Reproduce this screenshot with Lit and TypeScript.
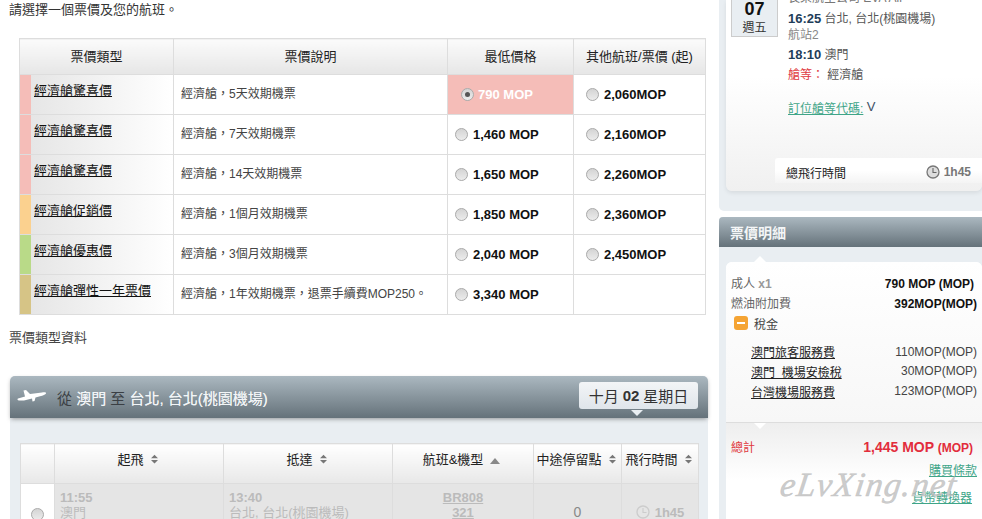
import { LitElement, html, css, svg } from "lit";
import { customElement } from "lit/decorators.js";

const fares = [
  ["#f5bdb8", "經濟艙驚喜價", "經濟艙，5天效期機票", "790 MOP", "2,060MOP"],
  ["#f5bdb8", "經濟艙驚喜價", "經濟艙，7天效期機票", "1,460 MOP", "2,160MOP"],
  ["#f5bdb8", "經濟艙驚喜價", "經濟艙，14天效期機票", "1,650 MOP", "2,260MOP"],
  ["#fbd18f", "經濟艙促銷價", "經濟艙，1個月效期機票", "1,850 MOP", "2,360MOP"],
  ["#b9da88", "經濟艙優惠價", "經濟艙，3個月效期機票", "2,040 MOP", "2,450MOP"],
  ["#d6c486", "經濟艙彈性一年票價", "經濟艙，1年效期機票，退票手續費MOP250。", "3,340 MOP", ""],
];

const sort = svg`<svg class="sort" width="7" height="10" viewBox="0 0 8 10"><path d="M4 0 8 4H0Z M0 6H8L4 10Z" fill="#777"/></svg>`;
const clock = (c: string) => html`<svg class="clock" width="14" height="14" viewBox="0 0 14 14"><circle cx="7" cy="7" r="6" fill="${c === "g" ? "none" : "#ddd"}" stroke="${c === "g" ? "#ccc" : "#777"}" stroke-width="1.3"/><path d="M7 3V7.5H10.5" fill="none" stroke="${c === "g" ? "#ccc" : "#666"}" stroke-width="1.1"/></svg>`;

@customElement("app-root")
export class AppRoot extends LitElement {
  static styles = css`
    :host { display: block; width: 982px; height: 519px; overflow: hidden; background: #fff; position: relative;
      font-family: "Liberation Sans", "Noto Sans CJK TC", sans-serif; font-size: 13px; color: #333; }
    .page { display: grid; grid-template-columns: 719px 263px; height: 519px; overflow: hidden; }
    .main { min-width: 0; }
    .intro { margin: 0; padding: 0 0 0 9px; line-height: 20px; color: #333; }
    table { border-collapse: collapse; table-layout: fixed; }
    .fares { width: 686px; margin: 18px 0 0 19px; }
    .fares th, .fares td { border: 1px solid #ddd; padding: 0; }
    .fares th { height: 36px; font-weight: 400; font-size: 13px; color: #222; padding-bottom: 2px; box-sizing: border-box;
      background: linear-gradient(#fbfbfb, #e6e6e6); text-align: center; }
    .fares td { height: 39px; }
    .c1 { width: 154px; } .c2 { width: 274px; } .c3 { width: 126px; } .c4 { width: 132px; }
    .type { display: flex; height: 39px; background: linear-gradient(90deg, #e4e4e4, #fff); }
    .bar { width: 11px; flex: none; margin-right: 3px; }
    .type a { color: #111; text-decoration: underline; line-height: 31px; height: 31px; }
    .desc { padding: 0 0 5px 7px !important; font-size: 12px; color: #444; box-sizing: border-box; }
    .price { font-weight: 700; color: #111; padding-left: 7px !important; }
    .price > div { display: flex; align-items: center; gap: 5px; }
    .c3p { padding-left: 12px !important; }
    .sel { background: #f5bdb8; color: #fff; padding-left: 13px !important; }
    .sel > div { gap: 4px; }
    .radio { width: 11px; height: 11px; border-radius: 50%; border: 1px solid #aaa; flex: none;
      background: linear-gradient(#d4d4d4, #ececec); display: inline-flex; align-items: center; justify-content: center; }
    .radio.on::after { content: ""; width: 5px; height: 5px; border-radius: 50%; background: #555; }
    .note { margin: 13px 0 0; padding-left: 9px; font-size: 13px; line-height: 20px; color: #444; }
    .flight { margin: 28px 0 0 10px; width: 698px; background: #e9eef2; border-radius: 5px 5px 0 0; height: 143px; }
    .fhead { height: 42px; border-radius: 5px 5px 0 0; background: linear-gradient(#abb8c0, #65727a);
      display: flex; align-items: center; padding: 0 10px 0 6px; box-shadow: 0 2px 4px -1px rgba(60,60,60,.5); }
    .fhead svg { flex: none; }
    .route { margin-left: 9px; font-size: 15px; color: #f2f5f7; white-space: pre; text-shadow: 0 0 .6px rgba(255,255,255,.7); }
    .route .k { color: #3a3f44; text-shadow: none; }
    .date { margin-left: auto; width: 119px; height: 27px; border-radius: 3px; background: linear-gradient(#f3f5f7, #dfe5ea);
      font-size: 15px; color: #333; display: flex; align-items: center; justify-content: center; gap: 4px; position: relative; top: -2px; }
    .date::after { content: ""; position: absolute; left: 52px; top: 28px; border: 6px solid transparent; border-top-color: #e9eef2; border-bottom: 0; }
    .ftable { width: 678px; margin: 25px 0 0 10px; }
    .ftable th, .ftable td { border: 1px solid #ddd; padding: 0; }
    .ftable th { height: 40px; box-sizing: border-box; background: linear-gradient(#fff, #e8e8e8); font-weight: 400; color: #222; font-size: 13px; text-align: center; padding: 0 3px 10px 0; white-space: nowrap; }
    .ftable .sort { margin-left: 7px; }
    .ftable td { background: #e5e5e5; color: #bbb; height: 56px; vertical-align: top; }
    .ftable td.w { background: #fff; vertical-align: middle; text-align: center; padding-top: 8px; height: 48px; }
    .fl1 { width: 34px; } .fl2 { width: 169px; } .fl3 { width: 169px; } .fl4 { width: 141px; } .fl5 { width: 88px; } .fl6 { width: 77px; }
    .t { font-weight: 700; font-size: 13px; line-height: 15px; }
    .stack { padding: 6px 0 0 5px; line-height: 15px; }
    .mid { text-align: center; }
    .mid u { font-weight: 700; font-size: 13px; display: block; line-height: 15px; }
    .flightno { padding-top: 6px; text-align: center; }
    .centered { vertical-align: middle !important; text-align: center; font-size: 14px; padding-top: 1px; }
    .ftable td.zero { color: #888; }
    .dur { display: flex; align-items: center; justify-content: center; gap: 5px; font-weight: 700; height: 56px; }
    .side { min-width: 0; overflow: hidden; }
    .box1 { background: #e9eef2; height: 211px; border-radius: 0 0 0 5px; overflow: hidden; padding-left: 7px; box-sizing: border-box; }
    .card1 { height: 191px; border-radius: 0 0 6px 6px; background: linear-gradient(#fff 40%, #f0f0f0); box-shadow: 0 2px 4px rgba(0,0,0,.08); display: grid; grid-template-rows: 158px 25px; }
    .itin { display: flex; margin-top: -10px; height: 168px; }
    .day { width: 47px; height: 47px; margin-left: 5px; flex: none; background: #e9eef2; border: 1px solid #ccc; text-align: center; box-sizing: border-box; padding-top: 5px; }
    .day b { display: block; font-size: 18px; color: #111; line-height: 26px; }
    .day span { display: block; font-size: 12px; line-height: 12px; color: #333; }
    .info { margin-left: 10px; font-size: 12px; color: #555; line-height: 16px; }
    .info div { white-space: nowrap; }
    .info b { color: #1e3d59; font-size: 13px; }
    .airline { color: #777; }
    .l2 { margin-top: 5px; }
    .l4, .l5 { margin-top: 4px; }
    .muted { color: #888; }
    .red { color: #e0393e; }
    .info .pay { margin-top: 18px; }
    .info a { color: #3fa588; text-decoration: underline; }
    .code { font-size: 13px; color: #3d5266; position: relative; top: -2px; }
    .total { margin-left: 49px; background: linear-gradient(#fff 50%, #f4f4f4); border-radius: 3px 0 0 0; display: flex; align-items: center; justify-content: space-between; padding: 3px 11px 0 11px; font-size: 12px; color: #222; }
    .total span { display: inline-flex; align-items: center; gap: 4px; font-weight: 700; color: #777; font-size: 12px; }
    .box2 { margin-top: 6px; background: #e9eef2; height: 302px; border-radius: 4px 0 0 0; overflow: hidden; }
    .bh { height: 30px; background: linear-gradient(#abb8c0, #65727a); color: #f4f6f7; font-size: 14px; font-weight: 700; line-height: 32px; padding-left: 11px; }
    .card2 { margin: 15px 0 0 7px; height: 257px; background: #fff; border-radius: 6px; position: relative; box-sizing: border-box; }
    .card2::before { content: ""; position: absolute; left: 28px; top: -6px; border: 6px solid transparent; border-bottom-color: #fff; border-top: 0; }
    .rows { padding: 13px 5px 0 5px; height: 160px; box-sizing: border-box; background: linear-gradient(#fff, #f7f7f7); border-radius: 6px 6px 0 0; }
    .row { display: flex; justify-content: space-between; height: 20px; line-height: 18px; font-size: 12px; color: #666; }
    .row .v { font-weight: 700; color: #111; }
    .row .x { color: #999; font-weight: 700; }
    .v1 { margin-right: 3px; }
    .tax { display: flex; align-items: center; gap: 6px; padding-left: 3px; height: 20px; font-size: 12px; color: #444; margin-bottom: 11px; margin-top: -2px; }
    .minus { width: 14px; height: 14px; border-radius: 3px; background: #f5a433; display: flex; align-items: center; justify-content: center; }
    .minus::after { content: ""; width: 8px; height: 2px; background: #fff; }
    .sub { padding-left: 20px; }
    .sub a { color: #222; text-decoration: underline; }
    .sub .n { color: #444; font-size: 12px; margin-top: -1px; }
    .sub .n2 { margin-top: -2px; }
    .sum { position: relative; border-top: 1px solid #ddd; background: linear-gradient(#eee, #fff 60%); height: 97px; padding: 14px 9px 0 5px; box-sizing: border-box; }
    .sum::before { content: ""; position: absolute; left: 28px; top: 0; border: 6px solid transparent; border-top-color: #fff; border-bottom: 0; }
    .sumrow { display: flex; justify-content: space-between; align-items: center; color: #e0393e; font-size: 12px; line-height: 20px; }
    .sumrow b { font-size: 14px; color: #e22d3c; }
    .sumrow b small { font-size: 12px; }
    .lnk { text-align: right; font-size: 12px; color: #3fa588; text-decoration: underline; display: block; margin-right: -4px; margin-top: 3px; line-height: 20px; }
    .lnk2 { margin-right: 1px; margin-top: 7px; }
    .mark { position: absolute; left: 778px; top: 466px; font-family: "Liberation Serif", serif; font-style: italic; font-size: 34px; letter-spacing: 1.2px; color: rgba(190,190,190,.8); -webkit-text-stroke: .5px rgba(190,190,190,.8); transform: skewX(-8deg); transform-origin: left bottom; white-space: nowrap; pointer-events: none; }
  `;

  render() {
    return html`
      <div class="page">
        <div class="main">
          <p class="intro">請選擇一個票價及您的航班。</p>
          <table class="fares">
            <colgroup><col class="c1" /><col class="c2" /><col class="c3" /><col class="c4" /></colgroup>
            <tr><th>票價類型</th><th>票價說明</th><th>最低價格</th><th>其他航班/票價 (起)</th></tr>
            ${fares.map((f, i) => html`<tr>
              <td><div class="type"><span class="bar" style="background:${f[0]}"></span><a>${f[1]}</a></div></td>
              <td class="desc">${f[2]}</td>
              <td class="price ${i === 0 ? "sel" : ""}"><div><span class="radio ${i === 0 ? "on" : ""}"></span>${f[3]}</div></td>
              <td class="price c3p">${f[4] ? html`<div><span class="radio"></span>${f[4]}</div>` : ""}</td>
            </tr>`)}
          </table>
          <p class="note">票價類型資料</p>
          <section class="flight">
            <div class="fhead">
              <svg width="32" height="18" viewBox="0 0 32 18"><path d="M7.5 2.5 10 2 14 6 26 4.4C29 4 30.5 4.5 30 5.5 29.5 6.5 27 7.5 24 8.3L19.5 9.5 18.5 13 16.5 13.5 16 10.5 8 12.5H3C1.5 12.5 1 11 2 10.5L9 8.5Z" fill="#fff"/></svg>
              <span class="route"><span class="k">從 </span>澳門<span class="k"> 至 </span>台北, 台北(桃園機場)</span>
              <div class="date">十月 <b>02</b> 星期日</div>
            </div>
            <table class="ftable">
              <colgroup><col class="fl1" /><col class="fl2" /><col class="fl3" /><col class="fl4" /><col class="fl5" /><col class="fl6" /></colgroup>
              <tr>
                <th></th><th>起飛${sort}</th><th>抵達${sort}</th>
                <th>航班&機型<svg class="sort" width="10" height="6" viewBox="0 0 10 6"><path d="M5 0 10 6H0Z" fill="#888"/></svg></th>
                <th>中途停留點${sort}</th><th>飛行時間${sort}</th>
              </tr>
              <tr>
                <td class="w"><span class="radio"></span></td>
                <td><div class="stack"><div class="t">11:55</div>澳門</div></td>
                <td><div class="stack"><div class="t">13:40</div>台北, 台北(桃園機場)</div></td>
                <td><div class="flightno mid"><u>BR808</u><u>321</u></div></td>
                <td class="centered zero">0</td>
                <td><div class="dur">${clock("g")}1h45</div></td>
              </tr>
            </table>
          </section>
        </div>
        <aside class="side">
          <div class="box1">
            <div class="card1">
              <div class="itin">
                <div class="day"><b>07</b><span>週五</span></div>
                <div class="info">
                  <div class="airline">長榮航空公司 EVA Air</div>
                  <div class="l2"><b>16:25</b> 台北, 台北(桃園機場)</div>
                  <div class="muted">航站2</div>
                  <div class="l4"><b>18:10</b> 澳門</div>
                  <div class="l5"><span class="red">艙等：</span> 經濟艙</div>
                  <div class="pay"><a>訂位艙等代碼:</a> <span class="code">V</span></div>
                </div>
              </div>
              <div class="total">總飛行時間<span>${clock("d")}1h45</span></div>
            </div>
          </div>
          <div class="box2">
            <div class="bh">票價明細</div>
            <div class="card2">
              <div class="rows">
                <div class="row"><span>成人 <span class="x">x1</span></span><span class="v v1">790 MOP (MOP)</span></div>
                <div class="row"><span>燃油附加費</span><span class="v">392MOP(MOP)</span></div>
                <div class="tax"><span class="minus"></span>稅金</div>
                <div class="row sub"><a>澳門旅客服務費</a><span class="n">110MOP(MOP)</span></div>
                <div class="row sub"><a>澳門&nbsp; 機場安檢稅</a><span class="n n2">30MOP(MOP)</span></div>
                <div class="row sub"><a>台灣機場服務費</a><span class="n n2">123MOP(MOP)</span></div>
              </div>
              <div class="sum">
                <div class="sumrow"><span>總計</span><b>1,445 MOP <small>(MOP)</small></b></div>
                <a class="lnk">購買條款</a>
                <a class="lnk lnk2">貨幣轉換器</a>
              </div>
            </div>
          </div>
        </aside>
      </div>
      <div class="mark">eLvXing.net</div>
    `;
  }
}
